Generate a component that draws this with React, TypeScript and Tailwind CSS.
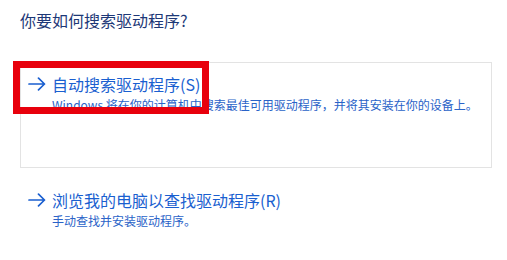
import React from 'react';

// Blue command-link arrow
const Arrow = () => (
  <svg width="18" height="14" viewBox="0 0 18 14" className="shrink-0">
    <path
      d="M1 7 H16.5 M10.5 1.2 L16.5 7 L10.5 12.8"
      fill="none"
      stroke="#1a5fd0"
      strokeWidth="1.7"
      strokeLinecap="round"
      strokeLinejoin="round"
    />
  </svg>
);

const CommandLink = ({ title, desc }: { title: string; desc: string }) => (
  <div className="flex flex-col">
    <div className="flex items-center h-[24px]">
      <div className="w-[24px]">
        <Arrow />
      </div>
      <span className="text-[16px] leading-[24px] text-[#1a5fd0]">{title}</span>
    </div>
    <div className="pl-[24px] text-[12px] leading-[18px] text-[#2a63c8]">{desc}</div>
  </div>
);

export default function App() {
  return (
    <div
      className="relative w-[507px] h-[260px] bg-white overflow-hidden"
      style={{ fontFamily: '"Noto Sans CJK SC", "Noto Sans", sans-serif' }}
    >
      <h1 className="pl-[20px] pt-[8px] text-[16px] leading-[24px] font-normal text-[#1d3877]">
        你要如何搜索驱动程序?
      </h1>

      <div className="ml-[20px] mt-[30px] w-[472px] h-[106px] border border-[#e3e3e3] pl-[7px] pt-[9px]">
        <CommandLink
          title="自动搜索驱动程序(S)"
          desc="Windows 将在你的计算机中搜索最佳可用驱动程序，并将其安装在你的设备上。"
        />
      </div>

      <div className="ml-[28px] mt-[20px]">
        <CommandLink title="浏览我的电脑以查找驱动程序(R)" desc="手动查找并安装驱动程序。" />
      </div>

      {/* red highlight annotation */}
      <div className="absolute left-[13px] top-[61px] w-[196px] h-[53px] border-[7px] border-[#e8000c]" />
    </div>
  );
}
